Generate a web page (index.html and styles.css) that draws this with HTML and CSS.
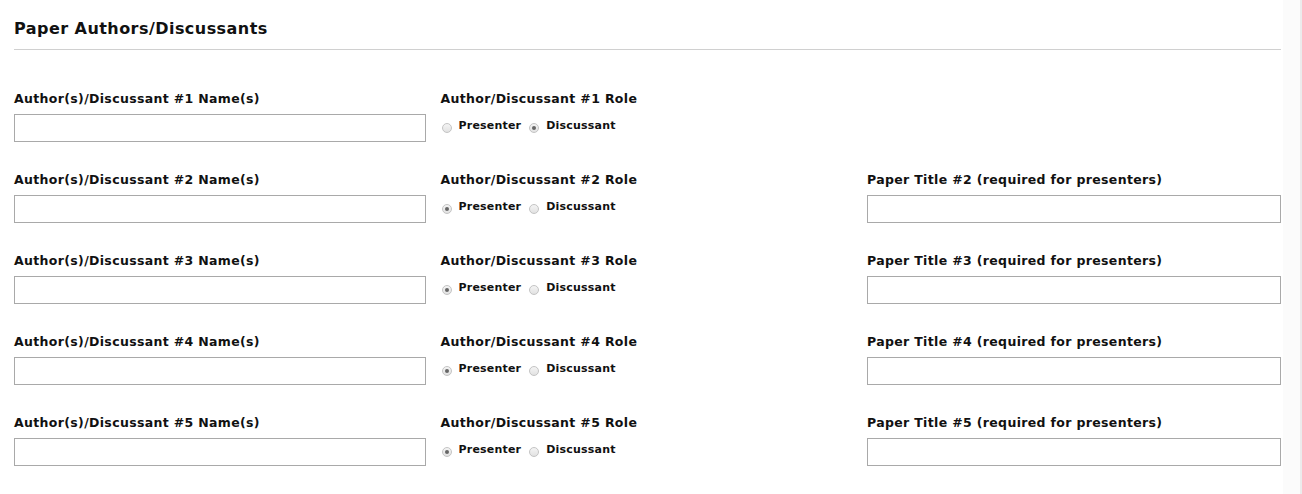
FILE: index.html
```html
<!DOCTYPE html>
<html>
<head>
<meta charset="utf-8">
<link rel="stylesheet" href="styles.css">
</head>
<body>
<div class="page">
  <main class="content">
    <h2 class="title">Paper Authors/Discussants</h2>
    <div class="grid">
      <div class="field"><label class="lbl">Author(s)/Discussant #1 Name(s)</label><input class="txt" type="text"></div>
      <div class="field"><label class="lbl">Author/Discussant #1 Role</label>
        <div class="radios"><span class="radio"></span><span class="rl">Presenter</span><span class="radio on"></span><span class="rl">Discussant</span></div></div>
      <div class="field"></div>

      <div class="field"><label class="lbl">Author(s)/Discussant #2 Name(s)</label><input class="txt" type="text"></div>
      <div class="field"><label class="lbl">Author/Discussant #2 Role</label>
        <div class="radios"><span class="radio on"></span><span class="rl">Presenter</span><span class="radio"></span><span class="rl">Discussant</span></div></div>
      <div class="field"><label class="lbl">Paper Title #2 (required for presenters)</label><input class="txt" type="text"></div>

      <div class="field"><label class="lbl">Author(s)/Discussant #3 Name(s)</label><input class="txt" type="text"></div>
      <div class="field"><label class="lbl">Author/Discussant #3 Role</label>
        <div class="radios"><span class="radio on"></span><span class="rl">Presenter</span><span class="radio"></span><span class="rl">Discussant</span></div></div>
      <div class="field"><label class="lbl">Paper Title #3 (required for presenters)</label><input class="txt" type="text"></div>

      <div class="field"><label class="lbl">Author(s)/Discussant #4 Name(s)</label><input class="txt" type="text"></div>
      <div class="field"><label class="lbl">Author/Discussant #4 Role</label>
        <div class="radios"><span class="radio on"></span><span class="rl">Presenter</span><span class="radio"></span><span class="rl">Discussant</span></div></div>
      <div class="field"><label class="lbl">Paper Title #4 (required for presenters)</label><input class="txt" type="text"></div>

      <div class="field"><label class="lbl">Author(s)/Discussant #5 Name(s)</label><input class="txt" type="text"></div>
      <div class="field"><label class="lbl">Author/Discussant #5 Role</label>
        <div class="radios"><span class="radio on"></span><span class="rl">Presenter</span><span class="radio"></span><span class="rl">Discussant</span></div></div>
      <div class="field"><label class="lbl">Paper Title #5 (required for presenters)</label><input class="txt" type="text"></div>
    </div>
  </main>
  <div class="side"></div>
  <div class="edge"></div>
</div>
</body>
</html>
```

FILE: styles.css
```css
html, body { margin: 0; padding: 0; background: #fff; }
body { font-family: "DejaVu Sans", Verdana, sans-serif; color: #000; }
.page { display: flex; height: 494px; overflow: hidden; }
.content { width: 1267px; padding: 0 2px 0 14px; }
.side { width: 17px; background: #fbfbfb; }
.edge { width: 2px; background: #ececec; }
.title { font-size: 16px; font-weight: bold; letter-spacing: 0.45px; margin: 0; padding-top: 18px; padding-bottom: 10px; border-bottom: 1px solid #d0d0d0; line-height: 21px; color: #111; }
.grid { display: grid; grid-template-columns: 412px 412px 414px; column-gap: 14.5px; row-gap: 0; padding-top: 41px; }
.field { height: 81px; display: flex; flex-direction: column; }
.lbl { font-size: 12.5px; font-weight: bold; letter-spacing: 0.34px; line-height: 16px; height: 16px; margin-bottom: 7px; color: #111; }
.txt { box-sizing: border-box; width: 100%; height: 28px; border: 1px solid #a9a9a9; margin: 0; padding: 0 4px; background: #fff; outline: none; }
.radios { display: flex; align-items: center; height: 20px; padding-top: 2px; }
.radio { width: 10px; height: 10px; box-sizing: border-box; border-radius: 50%; border: 1px solid #c4c4c4; background: linear-gradient(#f4f4f4, #e2e2e2); margin: 3px 7px 0 1px; display: flex; align-items: center; justify-content: center; }
.radio.on::after { content: ""; width: 4px; height: 4px; border-radius: 50%; background: #666; }
.rl { font-size: 11px; font-weight: bold; letter-spacing: 0.2px; margin-right: 7px; line-height: 16px; color: #111; }
```
